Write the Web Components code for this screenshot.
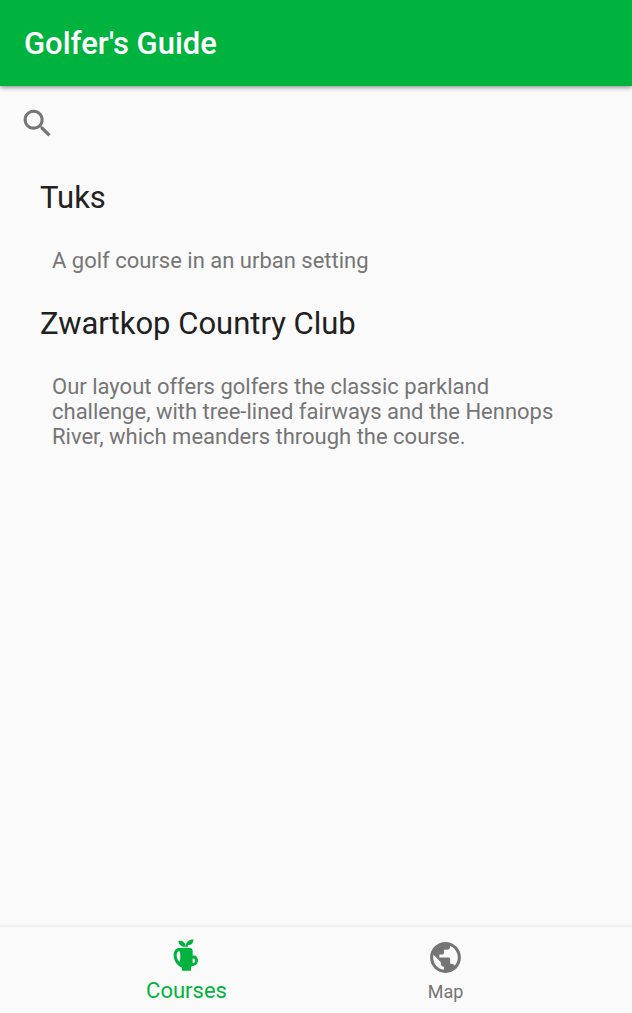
<!DOCTYPE html>
<html lang="en">
<head>
<meta charset="utf-8">
<meta name="viewport" content="width=device-width, initial-scale=1">
<title>Golfer's Guide</title>
<style>
  html, body { height: 100%; margin: 0; }
  body { background: #fafafa; font-family: Roboto, "Liberation Sans", sans-serif; }
</style>
</head>
<body>
<golf-app>
  <app-bar slot="header">Golfer's Guide</app-bar>
  <search-bar></search-bar>
  <course-list>
    <course-item>
      <span slot="name">Tuks</span>
      A golf course in an urban setting
    </course-item>
    <course-item>
      <span slot="name">Zwartkop Country Club</span>
      Our layout offers golfers the classic parkland challenge, with tree-lined fairways and the Hennops River, which meanders through the course.
    </course-item>
  </course-list>
  <tab-bar slot="footer">
    <tab-item active>
      <svg slot="icon" viewBox="114 66 111 111" width="37" height="37" fill="currentColor" aria-hidden="true">
        <path d="M145 78C156 76 166 82 167 95C155 97 147 90 145 78Z"/>
        <path d="M190 73C191 85 183 92 174 89L173 97H167C166 83 175 74 190 73Z"/>
        <path fill-rule="evenodd" d="M148 99H180C186 99 188 103 188 109V122C197 119 204 126 204 136C204 147 196 154 186 153L183 157V167H156V158C141 152 131 138 131 120C131 107 138 99 148 99ZM149 109C142 109 140 114 140 121C140 130 143 136 149 141C151 132 152 118 149 109ZM188 131V144C192 145 195 141 195 137C195 133 192 130 188 131Z"/>
      </svg>
      Courses
    </tab-item>
    <tab-item>
      <svg slot="icon" viewBox="0 0 24 24" width="37" height="37" fill="currentColor" aria-hidden="true">
        <path d="M12 2C6.480 2 2 6.480 2 12s4.480 10 10 10 10-4.480 10-10S17.520 2 12 2zm-1 17.930c-3.950-.49-7-3.850-7-7.930 0-.62.08-1.210.21-1.790L9 15v1c0 1.100.9 2 2 2v1.930zm6.900-2.540c-.26-.81-1-1.390-1.900-1.390h-1v-3c0-.55-.45-1-1-1H8v-2h2c.55 0 1-.45 1-1V7h2c1.100 0 2-.9 2-2v-.41c2.930 1.190 5 4.060 5 7.410 0 2.080-.8 3.970-2.100 5.390z"/>
      </svg>
      Map
    </tab-item>
  </tab-bar>
</golf-app>

<script>
  const define = (name, markup, setup) => {
    const template = document.createElement('template');
    template.innerHTML = markup;
    customElements.define(name, class extends HTMLElement {
      constructor() {
        super();
        this.attachShadow({ mode: 'open' }).append(template.content.cloneNode(true));
      }
      connectedCallback() { if (setup) setup(this); }
    });
  };

  define('golf-app', `
    <style>
      :host { display: flex; flex-direction: column; min-height: 100%; }
      main { flex: 1; }
    </style>
    <slot name="header"></slot>
    <main><slot></slot></main>
    <slot name="footer"></slot>`);

  define('app-bar', `
    <style>
      :host { display: block; background: #00b33f; color: #fff; box-shadow: 0 1px 5px rgba(0, 0, 0, .5); }
      h1 { margin: 0; padding: 26px 24px 24px; font-size: 31px; line-height: 36px; font-weight: 500; }
    </style>
    <header><h1><slot></slot></h1></header>`);

  define('search-bar', `
    <style>
      :host { display: block; padding: 19px 19px 18px; }
      button { display: block; margin: 0; padding: 0; border: 0; background: none; color: #757575; cursor: pointer; }
      svg { display: block; }
    </style>
    <button type="button" aria-label="Search">
      <svg viewBox="0 0 24 24" width="37" height="37" fill="currentColor" aria-hidden="true">
        <path d="M15.500 14h-.79l-.28-.27C15.410 12.590 16 11.110 16 9.500 16 5.910 13.090 3 9.500 3S3 5.910 3 9.500 5.910 16 9.500 16c1.610 0 3.090-.59 4.230-1.570l.27.28v.79l5 4.990L20.490 19l-4.990-5zm-6 0C7.010 14 5 11.990 5 9.500S7.010 5 9.500 5 14 7.010 14 9.500 11.990 14 9.500 14z"/>
      </svg>
    </button>`);

  define('course-list', `
    <style>
      :host { display: flex; flex-direction: column; gap: 33px; padding: 20px 40px 32px; }
    </style>
    <slot></slot>`);

  define('course-item', `
    <style>
      :host { display: block; }
      h2 { margin: 0; color: #212121; font-size: 31px; line-height: 36px; font-weight: 400; }
      p { margin: 32px 12px 0; color: #757575; font-size: 22px; line-height: 25px; }
    </style>
    <article>
      <h2><slot name="name"></slot></h2>
      <p><slot></slot></p>
    </article>`);

  define('tab-bar', `
    <style>
      :host { display: block; border-top: 2px solid #f0f0f0; }
      nav { display: flex; justify-content: center; }
    </style>
    <nav aria-label="Main"><slot></slot></nav>`);

  define('tab-item', `
    <style>
      :host { display: block; flex: 0 1 259px; color: #757575; font-size: 18px; }
      :host([active]) { color: #00b33f; font-size: 22px; }
      button {
        display: flex; flex-direction: column; align-items: center; gap: 2px;
        width: 100%; height: 86px; margin: 0; padding: 12px 0 0; border: 0;
        background: none; color: inherit; font: inherit; line-height: 28px; cursor: pointer;
      }
      :host([active]) button { padding-top: 10px; gap: 3px; }
    </style>
    <button type="button"><slot name="icon"></slot><span><slot></slot></span></button>`,
    el => {
      if (el.hasAttribute('active')) el.shadowRoot.querySelector('button').setAttribute('aria-current', 'page');
    });
</script>
</body>
</html>
